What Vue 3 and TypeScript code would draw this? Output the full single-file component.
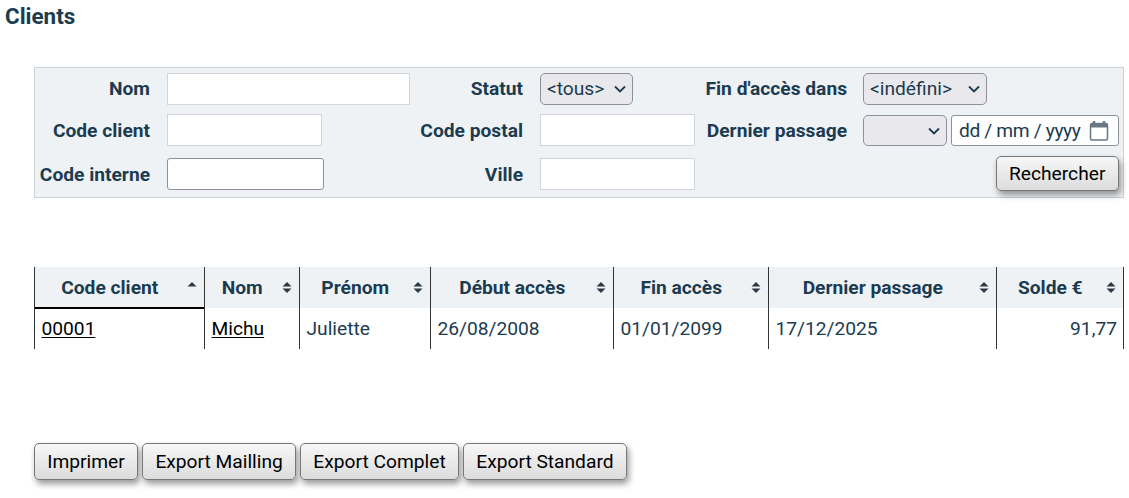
<script setup lang="ts">
interface Col { label: string; width: number; sort: 'asc' | 'both' }
const cols: Col[] = [
  { label: 'Code client', width: 170, sort: 'asc' },
  { label: 'Nom', width: 95, sort: 'both' },
  { label: 'Prénom', width: 131, sort: 'both' },
  { label: 'Début accès', width: 183, sort: 'both' },
  { label: 'Fin accès', width: 155, sort: 'both' },
  { label: 'Dernier passage', width: 228, sort: 'both' },
  { label: 'Solde €', width: 127, sort: 'both' },
]
const actions = ['Imprimer', 'Export Mailling', 'Export Complet', 'Export Standard']
</script>

<template>
  <main class="page">
    <h1 class="title">Clients</h1>

    <form class="filters" @submit.prevent>
      <label class="lab top">Nom</label>
      <div class="ctl"><input class="txt w243" type="text" /></div>
      <label class="lab top">Statut</label>
      <div class="ctl"><select class="sel w93"><option>&lt;tous&gt;</option></select></div>
      <label class="lab top">Fin d'accès dans</label>
      <div class="ctl ctl3"><select class="sel w124"><option>&lt;indéfini&gt;</option></select></div>

      <label class="lab">Code client</label>
      <div class="ctl"><input class="txt w155" type="text" /></div>
      <label class="lab">Code postal</label>
      <div class="ctl"><input class="txt w155" type="text" /></div>
      <label class="lab">Dernier passage</label>
      <div class="ctl ctl3 dates">
        <select class="sel w84 short"><option></option></select>
        <div class="date">
          <span class="mask">dd / mm / yyyy</span>
          <svg class="cal" width="20" height="20" viewBox="0 0 20 20" aria-hidden="true">
            <path d="M5 0v3M15 0v3" stroke="#667885" stroke-width="2.400" fill="none" />
            <path d="M1.500 4Q1.500 2.500 3 2.500h14Q18.500 2.500 18.500 4v13.500Q18.500 19 17 19H3Q1.500 19 1.500 17.500z" fill="none" stroke="#667885" stroke-width="1.500" />
            <path d="M1.500 3h17v3.500h-17z" fill="#667885" />
          </svg>
        </div>
      </div>

      <label class="lab low">Code interne</label>
      <div class="ctl low"><input class="txt native w157" type="text" /></div>
      <label class="lab low">Ville</label>
      <div class="ctl low"><input class="txt w155" type="text" /></div>
      <div class="submit"><button class="btn" type="submit">Rechercher</button></div>
    </form>

    <table class="grid">
      <colgroup>
        <col v-for="c in cols" :key="c.label" :style="{ width: c.width + 'px' }" />
      </colgroup>
      <thead>
        <tr>
          <th v-for="c in cols" :key="c.label" :class="{ active: c.sort === 'asc' }">
            <div class="th">
              <span class="thl">{{ c.label }}</span>
              <svg width="10" height="13" viewBox="0 0 10 13" aria-hidden="true">
                <path d="M5 1 9.500 5.500H.5z" fill="#2b3a44" />
                <path v-if="c.sort === 'both'" d="M5 12 .5 7.500h9z" fill="#2b3a44" />
              </svg>
            </div>
          </th>
        </tr>
      </thead>
      <tbody>
        <tr>
          <td><a href="#" @click.prevent>00001</a></td>
          <td><a href="#" @click.prevent>Michu</a></td>
          <td>Juliette</td>
          <td>26/08/2008</td>
          <td>01/01/2099</td>
          <td>17/12/2025</td>
          <td class="num">91,77</td>
        </tr>
      </tbody>
    </table>

    <div class="actions">
      <button v-for="a in actions" :key="a" class="btn" type="button">{{ a }}</button>
    </div>
  </main>
</template>

<style>
html, body { margin: 0; background: #fff; }
</style>

<style scoped>
.page {
  width: 1129px;
  height: 498px;
  overflow: hidden;
  box-sizing: border-box;
  font-family: Roboto, "Liberation Sans", sans-serif;
  font-size: 19.2px;
  color: #1b3b50;
}
.title {
  margin: 5px 0 0 5px;
  font-size: 22.4px;
  line-height: 23px;
  font-weight: 700;
}
.filters {
  box-sizing: border-box;
  width: 1090px;
  height: 131px;
  margin: 39px 0 0 34px;
  padding: 5px 4px 5px 5px;
  background: #eff2f5;
  border: 1px solid #cbd2da;
  display: grid;
  grid-template-columns: 110px 260px 113px 172px 152px 272px;
  grid-template-rows: 41px 42px 36px;
  align-items: start;
}
.lab {
  height: 32px;
  display: flex;
  align-items: center;
  justify-content: flex-end;
  font-weight: 700;
  white-space: nowrap;
}
.lab.top { height: 30px; }
.lab.low { margin-top: 2px; }
.ctl { padding-left: 17px; display: flex; }
.ctl.low { margin-top: 2px; }
.ctl3 { padding-left: 16px; }
.dates { gap: 4px; }
.txt {
  box-sizing: border-box;
  height: 32px;
  margin: 0;
  padding: 0 6px;
  background: #fff;
  border: 1px solid #d1d5db;
  border-radius: 0;
  font: inherit;
  outline: none;
}
.txt.native { border-color: #8f8f9d; border-radius: 3px; }
.w243 { width: 243px; }
.w155 { width: 155px; }
.w157 { width: 157px; }
.w93 { width: 93px; }
.w124 { width: 124px; }
.w84 { width: 84px; }
.sel {
  box-sizing: border-box;
  appearance: none;
  height: 32px;
  margin: 0;
  padding: 0 24px 2px 6px;
  font: inherit;
  color: #1b3b50;
  background-color: #e9e9ed;
  background-image: url("data:image/svg+xml,%3Csvg xmlns='http://www.w3.org/2000/svg' width='12' height='8' viewBox='0 0 12 8'%3E%3Cpath d='M1 1.500l5 5 5-5' fill='none' stroke='%231b3b50' stroke-width='1.800'/%3E%3C/svg%3E");
  background-repeat: no-repeat;
  background-position: right 6px center;
  border: 1px solid #8f8f9d;
  border-radius: 5px;
}
.short { height: 31px; margin-top: 1px; }
.date {
  box-sizing: border-box;
  width: 168px;
  height: 31px;
  margin-top: 1px;
  padding: 0 9px 0 7px;
  display: flex;
  align-items: center;
  justify-content: space-between;
  background: #fff;
  border: 1px solid #8f8f9d;
  border-radius: 3px;
  white-space: nowrap;
}
.mask { letter-spacing: -0.35px; }
.cal { flex: none; }
.submit {
  grid-column: 5 / 7;
  display: flex;
  justify-content: flex-end;
}
.btn {
  box-sizing: border-box;
  height: 37px;
  padding: 0 12.300px;
  font: inherit;
  color: #000;
  background: linear-gradient(#f7f7f7, #dcdcdc);
  border: 1px solid #777;
  border-radius: 5px;
  box-shadow: 2px 4px 6px rgba(0, 0, 0, 0.4);
}
.submit .btn { width: 123px; height: 35px; padding: 0 14px 0 12px; }
.grid {
  margin: 69px 0 0 34px;
  width: 1090px;
  table-layout: fixed;
  border-collapse: separate;
  border-spacing: 0;
  border-right: 1px solid #333;
}
th, td {
  box-sizing: border-box;
  padding: 0;
  border-left: 1px solid #333;
}
th {
  height: 41px;
  background: #eff2f5;
  font-weight: 700;
  overflow: hidden;
}
th.active { box-shadow: inset 0 -1px 0 #000, 0 1px 0 #000; }
.th {
  display: flex;
  align-items: center;
  gap: 10px;
  padding: 0 7.500px 0 8px;
}
.thl { flex: 1; text-align: center; white-space: nowrap; }
.th svg { flex: none; }
td {
  height: 41px;
  padding: 0 6px 0 6.500px;
}
td a { color: #000; text-underline-offset: 2px; }
.num { text-align: right; }
.actions {
  display: flex;
  gap: 4px;
  margin: 94px 0 0 34px;
}
</style>
